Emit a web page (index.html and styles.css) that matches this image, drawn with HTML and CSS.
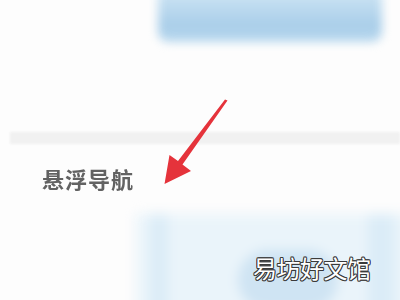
FILE: index.html
```html
<!DOCTYPE html>
<html lang="zh">
<head>
<meta charset="utf-8">
<link rel="stylesheet" href="styles.css">
</head>
<body>
<div class="screen">
  <div class="top">
    <div class="btn"></div>
  </div>
  <div class="divider"></div>
  <div class="row"><span class="label">悬浮导航</span></div>
  <div class="bottom">
    <div class="panel">
      <div class="strip"></div>
      <div class="spot"></div>
      <div class="strip right"></div>
    </div>
  </div>
  <svg class="arrow" width="400" height="300" viewBox="0 0 400 300">
    <path d="M227.5 100.5 L225 99.5 L178 161 L169.5 155 L164.5 184 L191 171 L182.5 164.5 Z" fill="#e5333b"/>
  </svg>
  <div class="watermark">易坊好文馆</div>
</div>
</body>
</html>
```
FILE: styles.css
```css
html, body {
  margin: 0;
  padding: 0;
  background: #ffffff;
}
.screen {
  position: relative;
  width: 400px;
  height: 300px;
  overflow: hidden;
  background: #fdfdfd;
  font-family: "Noto Sans CJK SC", "Noto Sans", sans-serif;
}
.top {
  display: flow-root;
  height: 132px;
  padding-left: 158px;
  padding-right: 18px;
  box-sizing: border-box;
}
.btn {
  margin-top: -14px;
  height: 56px;
  border-radius: 10px;
  background: linear-gradient(#d3e8f6, #a9cee9 70%, #b9d8ee);
  filter: blur(5px);
}
.divider {
  margin-left: 10px;
  height: 12px;
  background: #f1f1f1;
  filter: blur(1px);
}
.row {
  height: 70px;
  display: flex;
  align-items: center;
  padding-left: 42px;
  padding-bottom: 2px;
  box-sizing: border-box;
}
.label {
  font-size: 22px;
  font-weight: 700;
  color: #626262;
  letter-spacing: 1px;
  filter: blur(0.5px);
}
.bottom {
  display: flow-root;
  padding-left: 136px;
  height: 90px;
}
.panel {
  display: flex;
  height: 110px;
  margin-right: -20px;
  background: #eaf4fa;
  filter: blur(6px);
  padding: 0 0 0 14px;
  box-sizing: border-box;
}
.strip {
  width: 18px;
  background: #dbecf7;
}
.strip.right {
  margin-left: 30px;
  width: 26px;
}
.spot {
  margin-left: 70px;
  margin-top: 36px;
  width: 100px;
  height: 60px;
  border-radius: 30px;
  background: #cfe4f3;
}
.arrow {
  position: absolute;
  left: 0;
  top: 0;
  filter: blur(0.4px);
}
.watermark {
  position: absolute;
  left: 253px;
  top: 252px;
  font-size: 24px;
  line-height: 32px;
  font-weight: 400;
  color: #ffffff;
  letter-spacing: -0.5px;
  text-shadow:
    1px 0 0 #3a3a3a, -1px 0 0 #3a3a3a, 0 1px 0 #3a3a3a, 0 -1px 0 #3a3a3a,
    0.7px 0.7px 0 #3a3a3a, -0.7px 0.7px 0 #3a3a3a, 0.7px -0.7px 0 #3a3a3a, -0.7px -0.7px 0 #3a3a3a;
  font-family: "Noto Sans CJK SC", sans-serif;
}
```
